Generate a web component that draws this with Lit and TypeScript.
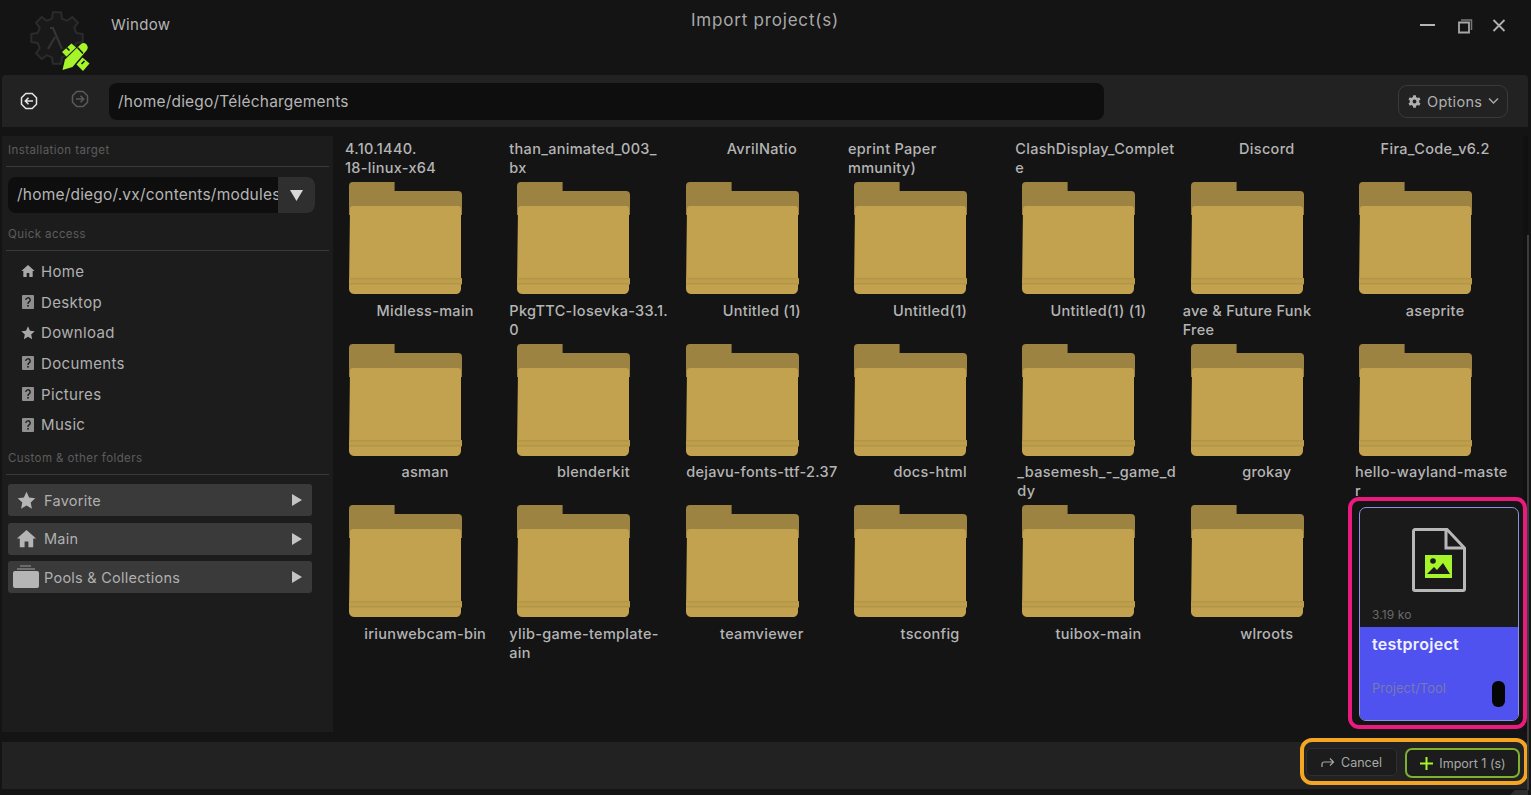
import { LitElement, css, html } from "lit";
import { customElement } from "lit/decorators.js";

interface Entry {
    lines: string[];
    // left aligned names were wrapped by the file view, the others are centered
    left?: number;
}

const labelsTop: Entry[] = [
    { lines: ["4.10.1440.", "18-linux-x64"], left: 4 },
    { lines: ["than_animated_003_", "bx"], left: 0 },
    { lines: ["AvrilNatio"] },
    { lines: ["eprint Paper", "mmunity)"], left: 2 },
    { lines: ["ClashDisplay_Complet", "e"], left: 1 },
    { lines: ["Discord"] },
    { lines: ["Fira_Code_v6.2"] },
];

const folders: Entry[] = [
    { lines: ["Midless-main"] },
    { lines: ["PkgTTC-Iosevka-33.1.", "0"], left: 0 },
    { lines: ["Untitled (1)"] },
    { lines: ["Untitled(1)"] },
    { lines: ["Untitled(1) (1)"] },
    { lines: ["ave & Future Funk", "Free"], left: 0 },
    { lines: ["aseprite"] },
    { lines: ["asman"] },
    { lines: ["blenderkit"] },
    { lines: ["dejavu-fonts-ttf-2.37"] },
    { lines: ["docs-html"] },
    { lines: ["_basemesh_-_game_d", "dy"], left: 3 },
    { lines: ["grokay"] },
    { lines: ["hello-wayland-maste", "r"], left: 4 },
    { lines: ["iriunwebcam-bin"] },
    { lines: ["ylib-game-template-", "ain"], left: 0 },
    { lines: ["teamviewer"] },
    { lines: ["tsconfig"] },
    { lines: ["tuibox-main"] },
    { lines: ["wlroots"] },
];

const HOME = "M12 3 2 12h3v9h5v-6h4v6h5v-9h3z";
const STAR = "M12 2l3 6.6 7 .8-5.2 4.8 1.4 7.1L12 17.7l-6.2 3.6 1.4-7.1L2 9.4l7-.8z";

function gearPath(cx: number, cy: number, outer: number, inner: number, teeth: number) {
    const pts: string[] = [];
    for (let i = 0; i < teeth; i++) {
        const a = (i / teeth) * Math.PI * 2 - Math.PI / 2;
        const s = (Math.PI * 2) / teeth;
        const at = (r: number, t: number) => `${(cx + Math.cos(a + t * s) * r).toFixed(1)} ${(cy + Math.sin(a + t * s) * r).toFixed(1)}`;
        pts.push(at(inner, -0.32), at(outer, -0.2), at(outer, 0.2), at(inner, 0.32));
    }
    return "M" + pts.join("L") + "Z";
}

@customElement("app-root")
export class AppRoot extends LitElement {
    static styles = css`
        :host {
            display: block;
            height: 795px;
            overflow: hidden;
            background: #141414;
            font-family: Inter, "Liberation Sans", sans-serif;
            color: #bdbdbd;
        }
        * { box-sizing: border-box; }
        svg { display: block; flex: none; }

        .root {
            height: 795px;
            position: relative;
            display: flex;
            flex-direction: column;
            padding: 0 3px 6px 2px;
        }

        .titlebar {
            height: 75px;
            flex: none;
            display: grid;
            grid-template-columns: 1fr auto 1fr;
            padding-left: 26px;
            padding-right: 22px;
        }
        .brand { display: flex; align-items: flex-start; gap: 19px; padding-top: 9px; }
        .brand span { font-size: 15px; letter-spacing: .3px; margin-top: 6px; color: #b5b5b5; }
        .title { font-size: 17px; letter-spacing: .8px; padding-top: 10px; color: #a8a8a8; transform: translateX(-2px); }
        .controls { display: flex; justify-content: flex-end; align-items: flex-start; gap: 19px; padding-top: 18px; }
        .controls svg:first-child { margin-right: 2px; }

        .toolbar {
            height: 52px;
            flex: none;
            display: flex;
            align-items: center;
            background: #222222;
            border-radius: 4px 4px 0 0;
            padding: 0 20px 0 18px;
        }
        .nav { display: flex; align-items: center; gap: 32px; margin-right: 20px; }
        .nav svg:last-child { margin: 0 0 4px 1px; }
        .path {
            flex: 1;
            height: 37px;
            background: #0e0e0e;
            border-radius: 8px;
            padding: 0 9px;
            display: flex;
            align-items: center;
            font-size: 15.5px;
            letter-spacing: .2px;
            color: #b5b5b5;
            margin-right: 295px;
        }
        .options {
            width: 110px;
            height: 33px;
            margin-left: -1px;
            border: 1px solid #3a3a3a;
            border-radius: 9px;
            display: flex;
            align-items: center;
            padding: 0 9px;
            gap: 6px;
            font-size: 14.5px;
            letter-spacing: .3px;
            color: #b0b0b0;
        }
        .options span { flex: 1; }

        .middle { flex: 1; min-height: 0; display: flex; margin-top: 9px; gap: 2px; }

        .sidebar {
            width: 331px;
            flex: none;
            height: 596px;
            background: #1c1c1c;
            padding-top: 7px;
        }
        .caption {
            font-size: 11.5px;
            letter-spacing: .42px;
            line-height: 15px;
            color: #5c5c5c;
            padding: 0 6px;
        }
        .rule { height: 1px; background: #3a3a3a; margin: 8px 4px 0; }
        .target {
            margin: 10px 0 0 6px;
            width: 307px;
            height: 36px;
            border-radius: 8px;
            overflow: hidden;
            display: flex;
            background: #0e0e0e;
        }
        .target-text {
            flex: 1;
            min-width: 0;
            overflow: hidden;
            white-space: nowrap;
            font-size: 15.5px;
            letter-spacing: .2px;
            line-height: 36px;
            padding-left: 9px;
            color: #b5b5b5;
        }
        .target-btn {
            width: 37px;
            flex: none;
            background: #2f2f2f;
            display: flex;
            align-items: center;
            justify-content: center;
        }
        .gap-q { margin-top: 14px; }
        .quick { padding: 5px 0 0 19px; }
        .quick-item {
            height: 30.7px;
            display: flex;
            align-items: center;
            gap: 6px;
            font-size: 15px;
            letter-spacing: .35px;
            color: #b0b0b0;
        }
        .quick-item .glyph { margin: 0 -1px; }
        .gap-c { margin-top: 11px; }
        .accordions { display: flex; flex-direction: column; gap: 6.5px; margin: 9px 0 0 6px; width: 304px; }
        .accordion {
            height: 32px;
            border-radius: 3px;
            background: #3a3a3a;
            display: flex;
            align-items: center;
            font-size: 14.5px;
            letter-spacing: .25px;
            color: #b0b0b0;
            padding-right: 9px;
        }
        .accordion .ico { width: 36px; display: flex; justify-content: center; flex: none; }
        .accordion span { flex: 1; }

        .files {
            flex: 1;
            min-width: 0;
            height: 596px;
            padding: 3px 0 0 6px;
            position: relative;
        }
        .grid {
            display: grid;
            grid-template-columns: repeat(7, 168.33px);
            row-gap: 5px;
            align-items: start;
        }
        .label {
            height: 38px;
            font-size: 14.5px;
            letter-spacing: .3px;
            font-weight: 500;
            line-height: 19px;
            white-space: nowrap;
            overflow: hidden;
            text-align: center;
            color: #b5b5b5;
        }
        .label div { overflow: hidden; }
        .label.wrapped { text-align: left; }
        .folder { display: block; margin: 0 0 5.5px 8px; }

        .card {
            position: relative;
            margin: 2px 0 0 8px;
            width: 160px;
            height: 214px;
            border: 1.5px solid #8c90e6;
            border-radius: 7px;
            background: #1a1a1a;
            display: flex;
            flex-direction: column;
        }
        .card-top { height: 119px; flex: none; position: relative; display: flex; flex-direction: column; align-items: center; padding-top: 20px; }
        .card-size { align-self: flex-start; margin: 15px 0 0 12px; font-size: 12px; letter-spacing: .1px; color: #6a6a6a; }
        .card-body {
            flex: 1;
            background: #4f52ee;
            border-radius: 0 0 5px 5px;
            padding: 7px 13px 0 12px;
            display: flex;
            flex-direction: column;
        }
        .card-name { font-size: 16px; letter-spacing: .3px; font-weight: 600; color: #f0f0ff; line-height: 20px; }
        .card-foot { margin-top: auto; margin-bottom: 13px; display: flex; align-items: flex-start; justify-content: space-between; font-size: 13px; line-height: 14px; color: #7878b4; }
        .pill { width: 13px; height: 26px; border-radius: 6px; background: #050505; }
        .mark-pink {
            position: absolute;
            inset: -11px -9px -9px -12px;
            border: 4px solid #ea1a7f;
            border-radius: 11px;
            pointer-events: none;
        }
        .scroll-track {
            position: absolute;
            top: 0;
            right: 0;
            bottom: 0;
            width: 5px;
            background: #111111;
        }
        .scroll-thumb {
            position: absolute;
            top: 235px;
            right: 2px;
            width: 2px;
            height: 555px;
            background: #3c3c3c;
        }
        .resize-corner {
            position: absolute;
            right: 3px;
            bottom: 0;
            width: 18px;
            height: 5px;
            background: #2e2e2e;
            clip-path: polygon(5px 0, 100% 0, 100% 100%, 0 100%);
        }

        .footer {
            height: 47px;
            flex: none;
            margin-top: -6px;
            background: #222222;
            display: flex;
            justify-content: flex-end;
            align-items: flex-start;
            gap: 8px;
            padding: 6px 8px 0 0;
        }
        .actions { position: relative; display: flex; gap: 8px; }
        .mark-orange {
            position: absolute;
            inset: -10px -8px -7px -6px;
            border: 4px solid #f5a524;
            border-radius: 12px;
            pointer-events: none;
        }
        .btn-cancel {
            width: 91px;
            height: 28px;
            border: 1px solid #2f2f2f;
            border-radius: 5px;
            background: #1c1c1c;
            display: flex;
            align-items: center;
            justify-content: center;
            gap: 6px;
            font-size: 12.5px;
            color: #a8a8a8;
        }
        .btn-import {
            width: 115px;
            height: 30px;
            border: 2px solid #7fb02e;
            border-radius: 7px;
            background: #1c1c1c;
            display: flex;
            align-items: center;
            justify-content: center;
            gap: 5px;
            font-size: 12.5px;
            color: #a8a8a8;
        }
    `;

    private _folder() {
        return html`<svg class="folder" width="113" height="113" viewBox="0 1 114 113" preserveAspectRatio="none">
            <path d="M0 5a4 4 0 0 1 4-4h42v9h64a4 4 0 0 1 4 4v20H0z" fill="#9c8342"></path>
            <path d="M1 28a3 3 0 0 1 3-3h106a3 3 0 0 1 3 3v80a6 6 0 0 1-1 3 5 5 0 0 1-3 2H5a5 5 0 0 1-4-2 6 6 0 0 1-1-3z" fill="#c2a24f"></path>
            <rect x="0" y="97" width="114" height="6" fill="#bd9e4c"></rect>
            <rect x="0" y="97" width="114" height="1.5" fill="#b39645"></rect>
            <rect x="0" y="102" width="114" height="1.5" fill="#b39645"></rect>
        </svg>`;
    }

    private _label(e: Entry) {
        const wrapped = e.left !== undefined;
        return html`<div
            class="label ${wrapped ? "wrapped" : ""}"
            style=${wrapped ? `padding-left:${e.left}px` : ""}
        >
            ${e.lines.map(l => html`<div>${l}</div>`)}
        </div>`;
    }

    private _logo() {
        return html`<svg width="64" height="64" viewBox="0 0 64 64">
            <path d=${gearPath(29, 29, 26, 20, 8)} fill="#191919" stroke="#2b2b2b" stroke-width="2" stroke-linejoin="round"></path>
            <path d="M22 19h3l9 21M27 28l-7 12" fill="none" stroke="#343434" stroke-width="2.2"></path>
            <g fill="#a6f52b">
                <path d="M34.500 61 37 50.500 53 35Q56 33 58.500 35.500 61 38.500 58.500 41.500L44.500 58Z"></path>
                <path d="M34 43 43.500 34.500 48 38.500 38.500 47.500Z"></path>
                <path d="M54.500 48.500 61.500 54.500 55 62 48.500 55.500Z"></path>
            </g>
            <g stroke="#141414" stroke-width="1.600" fill="none">
                <path d="M49.500 38.500l5.500 6"></path>
                <path d="M38.500 38.500l3 3"></path>
                <path d="M56.500 52l-3 3"></path>
            </g>
        </svg>`;
    }

    private _circleArrow(color: string, flip: boolean, size: number) {
        return html`<svg width=${size} height=${size} viewBox="0 0 18 18" style=${flip ? "transform:scaleX(-1)" : ""}>
            <path d="M5.8 1.500h6.400L16.500 5.800v6.400l-4.300 4.300H5.800L1.500 12.200V5.800z" fill="none" stroke=${color} stroke-width="1.500" stroke-linejoin="round"></path>
            <path d="M13 9H5.500M8.500 5.800 5.300 9l3.200 3.200" fill="none" stroke=${color} stroke-width="1.500"></path>
        </svg>`;
    }

    private _unknown() {
        return html`<svg width="14" height="14" viewBox="0 0 14 14">
            <rect x="1" y="0" width="12" height="14" rx="1" fill="#8f8f8f"></rect>
            <path d="M4.800 5a2.200 2.200 0 1 1 3.300 1.900c-.8.500-1.100 1-1.100 2" fill="none" stroke="#1c1c1c" stroke-width="1.400"></path>
            <rect x="6.200" y="10" width="1.600" height="1.600" fill="#1c1c1c"></rect>
        </svg>`;
    }

    private _glyph(d: string, size: number, color: string) {
        return html`<svg class="glyph" width=${size} height=${size} viewBox="0 0 24 24"><path d=${d} fill=${color}></path></svg>`;
    }

    private _arrowRight() {
        return html`<svg width="12" height="14" viewBox="0 0 12 14"><path d="M1 1l10 6-10 6z" fill="#c4c4c4"></path></svg>`;
    }

    private _quick(name: string, icon: unknown) {
        return html`<div class="quick-item">${icon}<span>${name}</span></div>`;
    }

    render() {
        return html`
            <div class="root">
                <div class="titlebar">
                    <div class="brand">
                        ${this._logo()}
                        <span>Window</span>
                    </div>
                    <div class="title">Import project(s)</div>
                    <div class="controls">
                        <svg width="16" height="14" viewBox="0 0 16 14"><path d="M0 7h15" stroke="#b5b5b5" stroke-width="2"></path></svg>
                        <svg width="16" height="16" viewBox="0 0 16 16">
                            <path d="M2 4.500h10v10H2z" fill="none" stroke="#a8a8a8" stroke-width="1.800"></path>
                            <path d="M4 2h10.500v10" fill="none" stroke="#777" stroke-width="1.500"></path>
                        </svg>
                        <svg width="14" height="14" viewBox="0 0 14 14"><path d="M1.500 2l11 11M12.500 2l-11 11" stroke="#b0b0b0" stroke-width="1.800"></path></svg>
                    </div>
                </div>

                <div class="toolbar">
                    <div class="nav">
                        ${this._circleArrow("#e4e4e4", false, 18)}
                        ${this._circleArrow("#5a5a5a", true, 18)}
                    </div>
                    <div class="path">/home/diego/Téléchargements</div>
                    <div class="options">
                        <svg width="13" height="13" viewBox="0 0 13 13">
                            <path d=${gearPath(6.5, 6.5, 6.3, 4.8, 6)} fill="#b0b0b0"></path>
                            <circle cx="6.500" cy="6.500" r="1.900" fill="#222"></circle>
                        </svg>
                        <span>Options</span>
                        <svg width="11" height="8" viewBox="0 0 11 8"><path d="M1 1.500l4.500 4.500L10 1.500" fill="none" stroke="#a8a8a8" stroke-width="1.500"></path></svg>
                    </div>
                </div>

                <div class="middle">
                    <aside class="sidebar">
                        <div class="caption">Installation target</div>
                        <div class="rule"></div>
                        <div class="target">
                            <div class="target-text">/home/diego/.vx/contents/modules</div>
                            <div class="target-btn">
                                <svg width="13" height="11" viewBox="0 0 13 11"><path d="M0 0h13L6.500 11z" fill="#d8d8d8"></path></svg>
                            </div>
                        </div>
                        <div class="caption gap-q">Quick access</div>
                        <div class="rule"></div>
                        <div class="quick">
                            ${this._quick("Home", this._glyph(HOME, 16, "#a8a8a8"))}
                            ${this._quick("Desktop", this._unknown())}
                            ${this._quick("Download", this._glyph(STAR, 16, "#a8a8a8"))}
                            ${this._quick("Documents", this._unknown())}
                            ${this._quick("Pictures", this._unknown())}
                            ${this._quick("Music", this._unknown())}
                        </div>
                        <div class="caption gap-c">Custom &amp; other folders</div>
                        <div class="rule"></div>
                        <div class="accordions">
                            <div class="accordion">
                                <div class="ico">${this._glyph(STAR, 21, "#b5b5b5")}</div>
                                <span>Favorite</span>${this._arrowRight()}
                            </div>
                            <div class="accordion">
                                <div class="ico">${this._glyph(HOME, 23, "#b5b5b5")}</div>
                                <span>Main</span>${this._arrowRight()}
                            </div>
                            <div class="accordion">
                                <div class="ico">
                                    <svg width="28" height="24" viewBox="0 0 28 24">
                                        <path d="M8 1h11" stroke="#9a9a9a" stroke-width="1"></path>
                                        <path d="M5 4h18" stroke="#a8a8a8" stroke-width="1"></path>
                                        <rect x="1" y="6" width="26" height="17" rx="2" fill="#b5b5b5"></rect>
                                    </svg>
                                </div>
                                <span>Pools &amp; Collections</span>${this._arrowRight()}
                            </div>
                        </div>
                    </aside>

                    <main class="files">
                        <div class="scroll-track"></div>
                        <div class="grid">
                            ${labelsTop.map(e => this._label(e))}
                            ${folders.map(e => html`<div>${this._folder()}${this._label(e)}</div>`)}
                            <div class="card">
                                <div class="card-top">
                                    <svg width="54" height="64" viewBox="0 0 54 64">
                                        <path d="M3 1.500h32L52.500 20v41a1.500 1.500 0 0 1-1.500 1.500H3A1.500 1.500 0 0 1 1.500 61V3A1.500 1.500 0 0 1 3 1.500z" fill="none" stroke="#b8b8b8" stroke-width="3"></path>
                                        <path d="M34 2v18h18" fill="none" stroke="#b8b8b8" stroke-width="3"></path>
                                        <rect x="13" y="27" width="27" height="23" fill="#a6f52b"></rect>
                                        <circle cx="21" cy="33" r="2.800" fill="#1a1a1a"></circle>
                                        <path d="M15 46l7-7 3 3 6-7 7 11z" fill="#1a1a1a"></path>
                                    </svg>
                                    <div class="card-size">3.19 ko</div>
                                </div>
                                <div class="card-body">
                                    <div class="card-name">testproject</div>
                                    <div class="card-foot"><span>Project/Tool</span><div class="pill"></div></div>
                                </div>
                                <div class="mark-pink"></div>
                            </div>
                        </div>
                    </main>
                </div>

                <div class="footer">
                    <div class="actions">
                        <div class="btn-cancel">
                            <svg width="14" height="11" viewBox="0 0 14 11"><path d="M1 10V7a2 2 0 0 1 2-2h9M9 1.500 12.500 5 9 8.500" fill="none" stroke="#a8a8a8" stroke-width="1.200"></path></svg>
                            <span>Cancel</span>
                        </div>
                        <div class="btn-import">
                            <svg width="15" height="15" viewBox="0 0 15 15"><path d="M7.500 1v13M1 7.500h13" stroke="#a6f52b" stroke-width="2"></path></svg>
                            <span>Import 1 (s)</span>
                        </div>
                        <div class="mark-orange"></div>
                    </div>
                </div>

                <div class="scroll-thumb"></div>
                <div class="resize-corner"></div>
            </div>
        `;
    }
}
